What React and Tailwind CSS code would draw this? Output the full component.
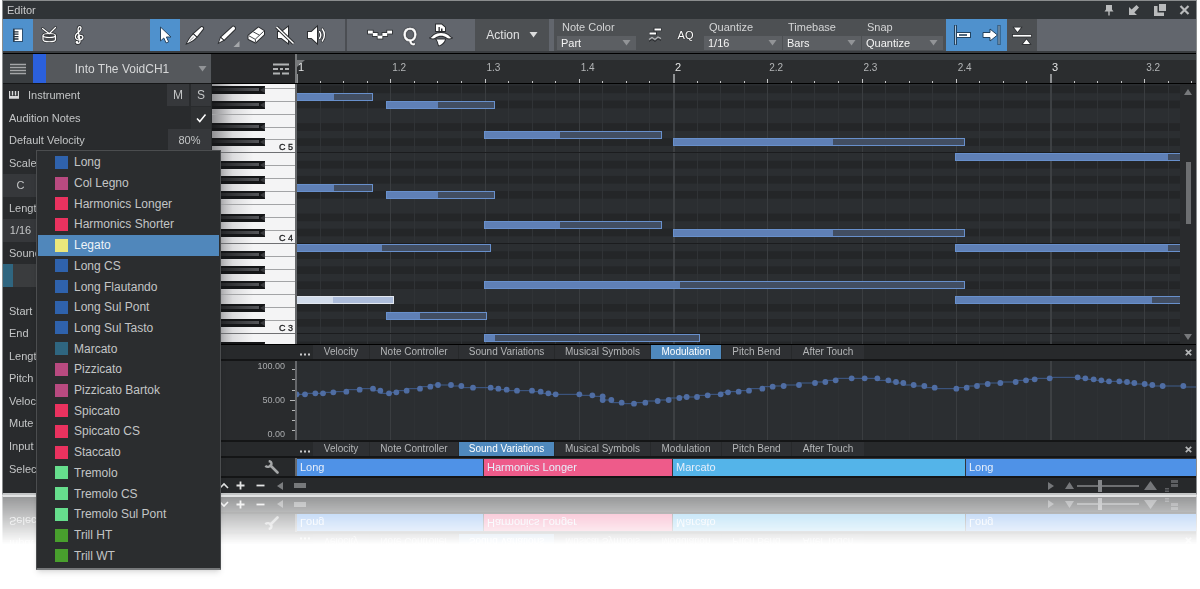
import React from "react";

const BEAT = 94.25;
const ROW = 7.53;
const C5_LINE = 69.4;
const BLACK = [1, 3, 6, 8, 10];

// start, velocity split and end are distances from bar 1; pitch counts semitones from C 5
const NOTES = [
  { start: 0, split: 38, end: 77, pitch: 7 },
  { start: 90, split: 142, end: 199, pitch: 6 },
  { start: 188, split: 264, end: 366, pitch: 2 },
  { start: 377, split: 537, end: 669, pitch: 1 },
  { start: 659, split: 872, end: 920, pitch: -1 },
  { start: 0, split: 38, end: 77, pitch: -5 },
  { start: 90, split: 142, end: 199, pitch: -6 },
  { start: 188, split: 264, end: 366, pitch: -10 },
  { start: 377, split: 537, end: 669, pitch: -11 },
  { start: 0, split: 86, end: 195, pitch: -13 },
  { start: 659, split: 872, end: 920, pitch: -13 },
  { start: 188, split: 384, end: 669, pitch: -18 },
  { start: 0, split: 37, end: 98, pitch: -20, selected: true },
  { start: 659, split: 856, end: 920, pitch: -20 },
  { start: 90, split: 124, end: 191, pitch: -22 },
  { start: 188, split: 199, end: 404, pitch: -25 },
];

// controller samples, three units to a pixel
const CURVE = [
  [140, 163], [165, 163], [196, 160], [219, 160], [250, 157], [289, 155], [329, 149], [369, 146], [391, 152],
  [417, 160], [439, 157], [470, 152], [510, 146], [541, 140], [564, 135], [603, 135], [634, 138], [669, 143],
  [722, 143], [745, 146], [770, 149], [801, 152], [846, 152], [872, 155], [895, 160], [917, 163], [988, 163],
  [1027, 166], [1058, 169], [1058, 180], [1084, 180], [1115, 188], [1152, 191], [1186, 188], [1223, 183],
  [1256, 180], [1288, 174], [1310, 171], [1341, 171], [1373, 166], [1412, 163], [1434, 157], [1466, 155],
  [1497, 152], [1537, 146], [1568, 140], [1601, 138], [1647, 135], [1695, 129], [1726, 126], [1757, 121],
  [1805, 115], [1844, 115], [1882, 115], [1915, 121], [1938, 126], [1960, 129], [1991, 135], [2023, 138],
  [2054, 143], [2119, 146], [2150, 143], [2181, 138], [2213, 132], [2251, 129], [2297, 126], [2328, 121],
  [2354, 118], [2399, 115], [2483, 112], [2506, 115], [2531, 118], [2554, 121], [2577, 124], [2608, 124],
  [2631, 126], [2653, 129], [2684, 132], [2707, 135], [2738, 138], [2800, 138],
].map(([x, y]) => [(x - 141) / 3, (y - 63) / 3]);

const VARIATIONS = [
  ["Long", "#2f62ac"],
  ["Col Legno", "#b84a80"],
  ["Harmonics Longer", "#ea325f"],
  ["Harmonics Shorter", "#ea325f"],
  ["Legato", "#ebe77c"],
  ["Long CS", "#2f62ac"],
  ["Long Flautando", "#2f62ac"],
  ["Long Sul Pont", "#2f62ac"],
  ["Long Sul Tasto", "#2f62ac"],
  ["Marcato", "#2f6680"],
  ["Pizzicato", "#b84a80"],
  ["Pizzicato Bartok", "#b84a80"],
  ["Spiccato", "#ea325f"],
  ["Spiccato CS", "#ea325f"],
  ["Staccato", "#ea325f"],
  ["Tremolo", "#66de8d"],
  ["Tremolo CS", "#66de8d"],
  ["Tremolo Sul Pont", "#66de8d"],
  ["Trill HT", "#489f2d"],
  ["Trill WT", "#489f2d"],
];

const TABS = [
  ["Velocity", "w-[56px]"],
  ["Note Controller", "w-[88px]"],
  ["Sound Variations", "w-[95px]"],
  ["Musical Symbols", "w-[95px]"],
  ["Modulation", "w-[70px]"],
  ["Pitch Bend", "w-[69px]"],
  ["After Touch", "w-[72px]"],
];

function Icon({ w = 24, h = 24, children }) {
  return (
    <svg width={w} height={h} viewBox={`0 0 ${w} ${h}`} fill="none" aria-hidden="true" className="block shrink-0">
      {children}
    </svg>
  );
}

function Caret({ className = "text-[#929497]" }) {
  return (
    <svg width="9" height="6" viewBox="0 0 9 6" aria-hidden="true" className={className}>
      <path d="M0.500 0h8L4.500 5.500z" fill="currentColor" />
    </svg>
  );
}

function Tool({ label, active, className = "w-[30px]", children }) {
  return (
    <button
      type="button"
      aria-label={label}
      aria-pressed={!!active}
      className={`flex h-full shrink-0 items-center justify-center ${active ? "bg-[#4f91cd]" : ""} ${className}`}
    >
      {children}
    </button>
  );
}

const OUT = { stroke: "#2b2d30", strokeWidth: 1, paintOrder: "stroke", strokeLinejoin: "round" };

function PianoIcon() {
  return (
    <Icon>
      <rect x="7.500" y="6" width="9" height="12.500" fill="#fff" stroke="#2d4f70" strokeWidth="1" />
      <path d="M7.500 8.800h5M7.500 11.200h5M7.500 13.600h5M7.500 16h5" stroke="#1f2d3a" strokeWidth="1.300" />
      <path d="M8 6v12.500" stroke="#1f2d3a" strokeWidth="1.200" />
    </Icon>
  );
}

function DrumIcon() {
  return (
    <Icon>
      <g stroke="#2b2d30" strokeWidth="2.600" strokeLinecap="round">
        <path d="M5.500 5.500l6.500 5M18.500 4.500l-6 6M6 13v3.500c0 3 12.500 3 12.500 0V13" />
        <ellipse cx="12.200" cy="12.500" rx="6.200" ry="2" />
      </g>
      <path d="M6 13v3.500c0 3 12.500 3 12.500 0V13z" fill="#4a4c50" />
      <g stroke="#fff" strokeWidth="1.200" strokeLinecap="round">
        <path d="M6 13v3.500c0 3 12.500 3 12.500 0V13" />
        <ellipse cx="12.200" cy="12.500" rx="6.200" ry="2" fill="#3b3d41" />
        <path d="M5.500 5.500l6.500 5M18.500 4.500l-6 6" />
      </g>
    </Icon>
  );
}

function ClefIcon() {
  const d =
    "M12.600 12.400c-2.200.1-2.100 2.900-.2 3.100M12.600 16.800c-3.800.6-5.400-2.900-3.500-5.300 1.500-1.900 4.700-3.500 4.900-6.100.1-2.600-2.700-2.300-2.900.3-.2 3.200 1.900 9.300 1.900 12.600 0 2.700-3.500 2.700-3.700.7M12.600 12.400c4.200-.6 4.500 4.100 0 4.400";
  return (
    <Icon>
      <g strokeLinecap="round">
        <path d={d} stroke="#2b2d30" strokeWidth="2.800" />
        <path d={d} stroke="#fff" strokeWidth="1.300" />
        <circle cx="10" cy="19.200" r="1.200" fill="#fff" />
      </g>
    </Icon>
  );
}

function ArrowIcon() {
  return (
    <Icon>
      <path d="M7.500 4v14l3.300-3 2.300 5 2.600-1.200-2.300-4.800h4.600z" fill="#fff" stroke="#28445f" strokeWidth="1" />
    </Icon>
  );
}

function KnifeIcon() {
  return (
    <Icon>
      <path d="M18.500 4c1 .1 1.800.8 1.600 1.800L14 13.500l-3.200-2.800z" fill="#fff" stroke="#2b2d30" strokeWidth="2" paintOrder="stroke" />
      <path d="M10.300 11.500l3 2.800c-1.500 2-5.500 4.700-9.300 6 1.500-3.200 3.800-6.600 6.300-8.800z" fill="#fff" stroke="#2b2d30" strokeWidth="1.800" paintOrder="stroke" />
      <path d="M6.500 18l4.200-4" stroke="#6a6d72" strokeWidth=".8" />
    </Icon>
  );
}

function PencilIcon() {
  return (
    <Icon w={28} h={28}>
      <path d="M21 5.500c1.300.2 2.200 1.100 2 2.500L12 18.800l-2.800-2.600z" fill="#fff" stroke="#2b2d30" strokeWidth="2" paintOrder="stroke" />
      <path d="M8.700 16.900l2.500 2.400-4.200 2.200z" fill="#fff" stroke="#2b2d30" strokeWidth="1.600" paintOrder="stroke" />
      <path d="M27.500 20v6h-6z" fill="#a5a8ab" />
    </Icon>
  );
}

function EraserIcon() {
  return (
    <Icon>
      <path d="M14.500 4.500l5.500 3.500v3.500l-8.500 8L4.500 16v-3.500z" fill="#fff" stroke="#2b2d30" strokeWidth="2" paintOrder="stroke" strokeLinejoin="round" />
      <path d="M4.700 12.700l6.500 3.600 8.500-8M11.400 16.300v3M9.200 8.800l6.300 3.400" stroke="#44474b" strokeWidth="1" />
    </Icon>
  );
}

function MuteIcon() {
  return (
    <Icon>
      <path d="M5 9h3.500L15 4v16l-6.500-5H5z" fill="#fff" stroke="#2b2d30" strokeWidth="2" paintOrder="stroke" />
      <path d="M3.500 4L20.500 20.500" stroke="#2b2d30" strokeWidth="3.400" />
      <path d="M3.500 4L20.500 20.500" stroke="#fff" strokeWidth="1.500" />
    </Icon>
  );
}

function SpeakerIcon() {
  return (
    <Icon>
      <path d="M4 9h3.500L13 4v16l-5.500-5H4z" fill="#fff" stroke="#2b2d30" strokeWidth="2" paintOrder="stroke" />
      <path d="M15.500 8.500c1.500 2 1.500 5 0 7M18.300 6c2.800 3.500 2.800 8.500 0 12" stroke="#2b2d30" strokeWidth="2.800" strokeLinecap="round" />
      <path d="M15.500 8.500c1.500 2 1.500 5 0 7M18.300 6c2.800 3.500 2.800 8.500 0 12" stroke="#fff" strokeWidth="1.400" strokeLinecap="round" />
    </Icon>
  );
}

function StepsIcon() {
  const steps = [[0, 0], [4.8, 2.4], [9.6, 5], [14.4, 2.4], [19.2, 0]];
  return (
    <Icon w={26} h={12}>
      {steps.map(([x, y]) => (
        <rect key={x} x={x + 0.2} y={y + 0.8} width="6.400" height="4.600" fill="#2b2d30" />
      ))}
      {steps.map(([x, y]) => (
        <rect key={x} x={x + 1} y={y + 1.6} width="4.800" height="3" fill="#fff" />
      ))}
    </Icon>
  );
}

function HumanizeIcon() {
  return (
    <Icon w={24} h={26}>
      <path d="M7 9V2.500h5.500l3.500 3V9h-2.500V6.500H12V9h-1.200V5H9.500v4z" fill="#fff" stroke="#2b2d30" strokeWidth="1.800" paintOrder="stroke" />
      <path d="M1.500 16c1-.3 1.800-1.500 3.500-3 3.500-2.800 10.500-2.800 14 0 1.700 1.500 2.500 2.700 3.500 3-2 .8-3.800.5-5-.5-3-2.300-8-2.300-11 0-1.200 1-3 1.300-5 .5z" fill="#fff" stroke="#2b2d30" strokeWidth="1.800" paintOrder="stroke" />
      <path d="M7.500 17.500h8.500c-.5 2.500-3 5-6 6-1-2-.8-4-2.500-6z" fill="#fff" stroke="#2b2d30" strokeWidth="1.800" paintOrder="stroke" />
    </Icon>
  );
}

function WaveIcon() {
  return (
    <Icon w={14} h={18}>
      <path d="M5.500 3.500h8M1 7.500h8" stroke="#2b2d30" strokeWidth="3.400" />
      <path d="M6.500 3.500h6.500M1.500 7.500h6.500" stroke="#fff" strokeWidth="1.800" />
      <path d="M1 13.500l3-2 3 2 3-2.500 3 1.500" stroke="#b3b5b8" strokeWidth="1.200" />
      <path d="M1 15.500l3-2 3 2 3-2.500 3 1.500" stroke="#2b2d30" strokeWidth="1" />
    </Icon>
  );
}

function ToolbarSelect({ id, label, value, className }) {
  return (
    <div className={`flex h-full flex-col justify-between pb-[1px] ${className}`}>
      <label htmlFor={id} className="pl-[5px] pt-[2px] text-[11px] leading-[13px] text-[#d4d5d6]">
        {label}
      </label>
      <div className="grid h-[14px] bg-[#5c5f63]">
        <select
          id={id}
          defaultValue={value}
          className="col-start-1 row-start-1 h-[14px] w-full appearance-none bg-transparent pl-[4px] text-[11px] leading-[14px] text-[#f4f4f4] outline-none"
        >
          <option>{value}</option>
        </select>
        <span className="pointer-events-none col-start-1 row-start-1 mr-[5px] self-center justify-self-end">
          <Caret />
        </span>
      </div>
    </div>
  );
}

function TitleBar() {
  return (
    <header className="flex h-[18px] items-center justify-between bg-[#303437] pl-[4px] pr-[6px]">
      <h1 className="text-[11px] leading-[18px] text-[#c9cacb]">Editor</h1>
      <div className="flex items-center gap-[13px] text-[#b9bbbc]">
        <button type="button" aria-label="Pin">
          <Icon w={12} h={12}>
            <path d="M3 1h6v4.500l1.500 2h-9l1.500-2zM5.300 7h1.400v4.500H5.300z" fill="currentColor" />
          </Icon>
        </button>
        <button type="button" aria-label="Dock">
          <Icon w={12} h={12}>
            <path d="M1 11V3l2.600 2.600L8.500 1 11 3.500 6.400 8.400 9 11z" fill="currentColor" />
          </Icon>
        </button>
        <button type="button" aria-label="Detach">
          <Icon w={13} h={12}>
            <path d="M6 0h7v7H6zM1 2h3.500v6.500H11V12H1z" fill="currentColor" />
          </Icon>
        </button>
        <button type="button" aria-label="Close">
          <Icon w={11} h={12}>
            <path d="M1.500 2l8 8M9.500 2l-8 8" stroke="currentColor" strokeWidth="2.200" />
          </Icon>
        </button>
      </div>
    </header>
  );
}

function Toolbar() {
  return (
    <div className="border-b border-black bg-[#3a3d40] pb-[2px]">
      <div className="flex h-[32px] bg-[#62666d]">
        <div className="flex w-[147px] shrink-0">
          <Tool label="Piano view" active>
            <PianoIcon />
          </Tool>
          <Tool label="Drum view" className="w-[31px]">
            <DrumIcon />
          </Tool>
          <Tool label="Score view">
            <ClefIcon />
          </Tool>
        </div>
        <div className="flex w-[197px] shrink-0 border-r-2 border-[#4b4e53]">
          <Tool label="Arrow tool" active>
            <ArrowIcon />
          </Tool>
          <Tool label="Split tool">
            <KnifeIcon />
          </Tool>
          <Tool label="Paint tool" className="w-[32px]">
            <PencilIcon />
          </Tool>
          <Tool label="Eraser tool" className="w-[28px]">
            <EraserIcon />
          </Tool>
          <Tool label="Mute tool">
            <MuteIcon />
          </Tool>
          <Tool label="Listen tool" className="w-[32px]">
            <SpeakerIcon />
          </Tool>
        </div>
        <div className="flex w-[128px] shrink-0 pl-[18px]">
          <Tool label="Steps">
            <StepsIcon />
          </Tool>
          <Tool label="Quantize">
            <span className="text-[18px] leading-[20px] text-white [-webkit-text-stroke:0.5px_white] [text-shadow:0_0_2px_#222,0_0_1px_#222]">
              Q
            </span>
          </Tool>
          <Tool label="Humanize" className="w-[32px]">
            <HumanizeIcon />
          </Tool>
        </div>
        <button
          type="button"
          className="flex w-[74px] shrink-0 items-center justify-center gap-[9px] bg-[#4d5053] text-[12px] text-[#e0e1e2]"
        >
          Action
          <Caret className="text-[#dcdddd]" />
        </button>
        <div className="ml-[5px] flex w-[392px] shrink-0 bg-[#4d5053] pl-[3px]">
          <ToolbarSelect id="note-color" label="Note Color" value="Part" className="w-[79px]" />
          <div className="flex w-[68px] items-center">
            <Tool label="Apply groove" className="w-[37px]">
              <WaveIcon />
            </Tool>
            <Tool label="Auto quantize" className="w-[25px]">
              <span className="text-[11px] text-white [text-shadow:0_0_1px_#222,0_0_1px_#222]">AQ</span>
            </Tool>
          </div>
          <div className="flex gap-[1px]">
            <ToolbarSelect id="quantize" label="Quantize" value="1/16" className="w-[78px]" />
            <ToolbarSelect id="timebase" label="Timebase" value="Bars" className="w-[78px]" />
            <ToolbarSelect id="snap" label="Snap" value="Quantize" className="w-[81px]" />
          </div>
        </div>
        <Tool label="Snap to start" active className="w-[31px]">
          <Icon>
            <path d="M5.500 2v20" stroke="#22425f" strokeWidth="3" />
            <path d="M5.500 2.500v19" stroke="#a9c3da" strokeWidth="1" />
            <rect x="6.500" y="9.500" width="14" height="5" fill="#fff" stroke="#22425f" />
            <path d="M9 12h8" stroke="#22425f" strokeWidth="1.600" />
          </Icon>
        </Tool>
        <Tool label="Snap to end" active>
          <Icon>
            <path d="M19 2v20" stroke="#22425f" strokeWidth="3" />
            <path d="M19 2.500v19" stroke="#a9c3da" strokeWidth="1" />
            <path d="M3 9.500h7V6l7.500 6-7.500 6v-3.500H3z" fill="#fff" stroke="#22425f" />
          </Icon>
        </Tool>
        <Tool label="Snap to grid" className="w-[30px] bg-[#4d5053]">
          <Icon w={20} h={24}>
            <path d="M2 4.500h7l-3.500 4.500zM11 21h7l-3.500-4.500z" fill="#fff" stroke="#2b2d30" strokeWidth="1.600" paintOrder="stroke" />
            <rect x="0.500" y="11.500" width="19" height="2.500" fill="#fff" stroke="#2b2d30" strokeWidth=".8" />
          </Icon>
        </Tool>
      </div>
    </div>
  );
}

function Field({ children }) {
  return <div className="flex min-h-0 flex-1 items-center justify-between pl-[6px]">{children}</div>;
}

function Inspector() {
  return (
    <aside className="flex w-[209px] shrink-0 flex-col bg-[#292b2d] text-[11px] text-[#c3c5c6]">
      <div className="flex h-[29px] pr-[1px]">
        <button type="button" aria-label="Track list" className="flex w-[30px] items-center justify-center bg-[#3a3e41]">
          <Icon w={16} h={12}>
            <path d="M0 1.500h16M0 4.500h16M0 7.500h16M0 10.500h16" stroke="#a4a6a8" strokeWidth="1.500" />
          </Icon>
        </button>
        <span className="w-[13px] bg-[#2b60dc]" />
        <button type="button" className="flex flex-1 items-center bg-[#55585c] pr-[4px] text-[12px] text-[#d6d7d8]">
          <span className="flex-1 text-center">Into The VoidCH1</span>
          <Caret />
        </button>
      </div>
      <div className="flex h-[397px] flex-col border-t border-[#161718]">
        <Field>
          <span className="flex items-center gap-[9px]">
            <Icon w={10} h={8}>
              <path d="M.5 0v7h9V0M3.500 0v4.500M6.500 0v4.500" stroke="#d8d9da" strokeWidth="1.400" />
              <path d="M1 6h8" stroke="#d8d9da" strokeWidth="2" />
            </Icon>
            Instrument
          </span>
          <span className="flex h-full gap-[2px] pr-[1px] pb-[1px] text-[12px]">
            <button type="button" className="w-[22px] bg-[#36383b]">M</button>
            <button type="button" className="w-[20px] bg-[#36383b]">S</button>
          </span>
        </Field>
        <Field>
          <label htmlFor="audition">Audition Notes</label>
          <span className="mr-[1px] grid h-full w-[20px] place-items-center bg-[#2f3133]">
            <input id="audition" type="checkbox" defaultChecked className="col-start-1 row-start-1 size-[14px] appearance-none" />
            <span className="pointer-events-none col-start-1 row-start-1">
              <Icon w={12} h={12}>
                <path d="M2 6.500l2.800 3L10.500 2.500" stroke="#fff" strokeWidth="1.500" />
              </Icon>
            </span>
          </span>
        </Field>
        <Field>
          <label htmlFor="velocity">Default Velocity</label>
          <input
            id="velocity"
            defaultValue="80%"
            className="mr-[1px] h-full w-[43px] bg-[#36383b] text-center outline-none"
          />
        </Field>
        <Field>Scale</Field>
        <div className="flex min-h-0 flex-1">
          <button type="button" className="w-[35px] bg-[#36383b]">C</button>
        </div>
        <Field>Length</Field>
        <div className="flex min-h-0 flex-1">
          <button type="button" className="w-[35px] bg-[#36383b]">1/16</button>
        </div>
        <Field>Sound</Field>
        <div className="flex min-h-0 flex-1 bg-[#3a3c3e]">
          <span className="w-[10px] bg-[#2f6680]" />
        </div>
        <div className="h-[13px] shrink-0" />
        <Field>Start</Field>
        <Field>End</Field>
        <Field>Length</Field>
        <Field>Pitch</Field>
        <Field>Velocity</Field>
        <Field>Mute</Field>
        <Field>Input</Field>
        <Field>Selection</Field>
      </div>
    </aside>
  );
}

function Ruler() {
  const ticks = [];
  for (let i = 0; i < 39; i++) ticks.push(i);
  return (
    <div className="flex h-[30px] border-b border-black">
      <div className="flex w-[85px] shrink-0 items-center justify-end border-r-2 border-[#77797b] bg-[#292a2c] pr-[6px]">
        <button type="button" aria-label="Ruler options">
          <Icon w={16} h={12}>
            <path d="M0 1.500h16M0 6h5M7 6h3M12 6h4M0 10.500h7M9 10.500h7" stroke="#b1b3b4" strokeWidth="2" />
          </Icon>
        </button>
      </div>
      <div className="min-w-0 flex-1 border-t-[6px] border-[#3a3e41] bg-[#2b2d2f]">
        <svg width="100%" height="23" className="block" fontFamily="Liberation Sans, Arial, sans-serif">
          <path d="M0 0h8L0 7z" fill="#77797b" />
          {ticks.map((i) => {
            const x = Math.round((i * BEAT) / 4) - 1;
            const beat = i % 4 === 0;
            const bar = i % 16 === 0;
            return (
              <rect
                key={i}
                x={x}
                y={bar ? 14 : beat ? 19 : 21}
                width={bar ? 2 : 1}
                height={bar ? 9 : beat ? 4 : 2}
                fill={bar ? "#8f9193" : "#c5c6c7"}
              />
            );
          })}
          {ticks
            .filter((i) => i % 4 === 0)
            .map((i) => {
              const bar = Math.floor(i / 16) + 1;
              const beat = (i % 16) / 4 + 1;
              return (
                <text key={i} x={(i * BEAT) / 4 + 1} y="11" fontSize={beat === 1 ? 11 : 10} fill={beat === 1 ? "#e4e5e5" : "#b3b5b7"}>
                  {beat === 1 ? bar : `${bar}.${beat}`}
                </text>
              );
            })}
        </svg>
      </div>
    </div>
  );
}

function Keyboard() {
  const whites = [];
  const blacks = [];
  for (let k = -18; k < 7; k++) whites.push(k);
  for (let n = -27; n < 10; n++) if (BLACK.includes((n + 36) % 12)) blacks.push(n);
  return (
    <svg width="83" height="260" className="block" fontFamily="Liberation Sans, Arial, sans-serif">
      <defs>
        <linearGradient id="ivory" x1="0" x2="1" y1="0" y2="0">
          <stop offset="0" stopColor="#8f8f92" />
          <stop offset=".25" stopColor="#dcdcde" />
          <stop offset=".5" stopColor="#f4f4f5" />
          <stop offset="1" stopColor="#f4f4f5" />
        </linearGradient>
        <linearGradient id="ebony" x1="0" x2="1" y1="0" y2="0">
          <stop offset="0" stopColor="#1a1b1d" />
          <stop offset="1" stopColor="#55565a" />
        </linearGradient>
      </defs>
      <rect width="83" height="260" fill="url(#ivory)" />
      {whites.map((k) => (
        <rect key={k} y={Math.round(C5_LINE - (k * ROW * 12) / 7) - 1} width="83" height="1" fill={k % 7 === 0 ? "#6f7073" : "#a3a4a6"} />
      ))}
      {blacks.map((n) => {
        const y = Math.round(C5_LINE - (n + 1) * ROW);
        return (
          <g key={n}>
            <rect y={y} width="53" height="8" fill="#151618" />
            <rect y={y + 2} width="47" height="3" fill="url(#ebony)" />
            <path d={`M53 ${y + 1}l-5 3 5 3z`} fill="#3a3b3e" />
          </g>
        );
      })}
      {[5, 4, 3].map((c) => (
        <text key={c} x="81" y={C5_LINE + (5 - c) * ROW * 12 - 3} fontSize="9" textAnchor="end" fill="#1c1d1f" stroke="#1c1d1f" strokeWidth=".3">
          C {c}
        </text>
      ))}
    </svg>
  );
}

function GridLines({ height, faint }) {
  const lines = [];
  for (let i = 1; i < 80; i++) lines.push(i);
  return lines.map((i) => (
    <rect
      key={i}
      x={Math.round((i * BEAT) / 4) - 1}
      width={i % 16 === 0 ? 2 : 1}
      height={height}
      fill={i % 16 === 0 ? "#3d4043" : i % 4 === 0 ? "#3a3d40" : faint}
    />
  ));
}

function PianoRoll() {
  const rows = [];
  for (let n = -27; n < 10; n++) rows.push(n);
  return (
    <div className="flex h-[261px] border-b border-black">
      <div className="w-[85px] shrink-0 border-r-2 border-[#66686b]">
        <Keyboard />
      </div>
      <div className="min-w-0 flex-1 overflow-hidden">
        <svg width="100%" height="260" className="block bg-[#2b2e31]" role="img" aria-label="Notes">
          {rows
            .filter((n) => BLACK.includes((n + 36) % 12))
            .map((n) => (
              <rect key={n} y={C5_LINE - (n + 1) * ROW} width="100%" height={ROW} fill="#242628" />
            ))}
          <GridLines height={260} faint="#303336" />
          {[0, -12, -24].map((n) => (
            <rect key={n} y={Math.round(C5_LINE - n * ROW) - 1} width="100%" height="1" fill="#1b1c1e" />
          ))}
          {NOTES.map((note, i) => {
            const y = Math.round(C5_LINE - (note.pitch + 1) * ROW);
            return (
              <g key={i}>
                <rect
                  x={note.start - 0.5}
                  y={y + 0.5}
                  width={note.end - note.start - 1}
                  height="7"
                  fill={note.selected ? "#adbddb" : "#424e62"}
                  stroke={note.selected ? "#e3e8f0" : "#6890cc"}
                />
                <rect
                  x={note.start}
                  y={y + 1}
                  width={note.split - note.start - 1}
                  height="6"
                  fill={note.selected ? "#d2dceb" : "#5f80b6"}
                />
              </g>
            );
          })}
        </svg>
      </div>
      <div className="flex w-[16px] shrink-0 flex-col items-center bg-[#292b2d] pt-[5px] pb-[4px]">
        <button type="button" aria-label="Scroll up">
          <Icon w={8} h={6}>
            <path d="M0 6h8L4 0z" fill="#77797b" />
          </Icon>
        </button>
        <span className="mt-[67px] h-[62px] w-[5px] bg-[#6d6f71]" />
        <button type="button" aria-label="Scroll down" className="mt-auto">
          <Icon w={8} h={6}>
            <path d="M0 0h8L4 6z" fill="#77797b" />
          </Icon>
        </button>
      </div>
    </div>
  );
}

function LaneTabs({ active }) {
  return (
    <nav className="flex h-[16px] border-b-2 border-[#141516] bg-[#27292b] pl-[85px] text-[10px] leading-[14px] text-[#b3b5b7]">
      <button type="button" aria-label="More lanes" className="flex w-[16px] items-center justify-center">
        <Icon w={10} h={8}>
          <path d="M0 5.500h2v2H0zM4 5.500h2v2H4zM8 5.500h2v2H8z" fill="#c9cacb" />
        </Icon>
      </button>
      <div className="flex flex-1 gap-[1px]">
        {TABS.map(([name, width]) => (
          <button
            key={name}
            type="button"
            className={`h-full shrink-0 whitespace-nowrap ${width} ${name === active ? "bg-[#4f89bd] text-white" : "bg-[#2e3033]"}`}
          >
            {name}
          </button>
        ))}
      </div>
      <button type="button" aria-label="Close lane" className="pr-[4px]">
        <Icon w={7} h={7}>
          <path d="M.8 .8l5.400 5.400M6.200 .8L.8 6.200" stroke="#b5b7b8" strokeWidth="1.700" />
        </Icon>
      </button>
    </nav>
  );
}

function Modulation() {
  const line = CURVE.map(([x, y], i) => (i ? `V${y}H${x}` : `M${x} ${y}`)).join("") + "V26H2000";
  return (
    <div className="flex h-[81px] border-b-2 border-[#141516] bg-[#2b2e31]">
      <div className="flex w-[85px] shrink-0 border-r-2 border-[#66686b] bg-[#292b2d]">
        <div className="flex flex-1 flex-col items-end justify-between pr-[5px] text-[9px] leading-[11px] text-[#a9abad]">
          <span>100.00</span>
          <span>50.00</span>
          <span>0.00</span>
        </div>
        <svg width="5" height="79" className="block" aria-hidden="true">
          {[8, 18, 29, 39, 49, 59, 69].map((y) => (
            <rect key={y} x={y === 39 ? 0 : 2} y={y} width="5" height="1" fill="#b5b7b8" />
          ))}
        </svg>
      </div>
      <div className="min-w-0 flex-1 overflow-hidden">
        <svg width="100%" height="79" className="block" role="img" aria-label="Modulation curve">
          <GridLines height={79} faint="#2e3134" />
          <path d={line} fill="none" stroke="#3f5c8c" strokeWidth="1" />
          {CURVE.map(([x, y], i) => (
            <circle key={i} cx={x} cy={y} r="2.900" fill="#4f6da3" />
          ))}
        </svg>
      </div>
    </div>
  );
}

function VariationLane() {
  return (
    <div className="flex h-[20px] border-b-2 border-[#141516] bg-[#27292b] text-[11px] leading-[18px] text-[#e6eefa]">
      <div className="flex w-[85px] shrink-0 items-center justify-end border-r-2 border-[#66686b] pr-[16px]">
        <button type="button" aria-label="Edit variations">
          <Icon w={15} h={14}>
            <path d="M6.500 5.500l7 7" stroke="#a5a7a8" strokeWidth="2.600" strokeLinecap="round" />
            <path d="M1.300 5.800c2 1.800 5.800 1 6.200-1.500C7.700 2.500 6.500 1.300 4.700 1" stroke="#a5a7a8" strokeWidth="2.300" />
          </Icon>
        </button>
      </div>
      <div className="flex min-w-0 flex-1 gap-[1px] bg-[#33353a] pt-[1px] leading-[17px]">
        <span className="w-[186px] shrink-0 bg-[#4f92e7] pl-[3px]">Long</span>
        <span className="w-[188px] shrink-0 bg-[#ee5b8a] pl-[3px]">Harmonics Longer</span>
        <span className="w-[292px] shrink-0 bg-[#54b4e9] pl-[3px]">Marcato</span>
        <span className="flex-1 bg-[#4f92e7] pl-[3px]">Long</span>
      </div>
    </div>
  );
}

function BottomBar() {
  return (
    <footer className="flex h-[15px] items-center justify-between bg-[#27292b] pl-[7px] pr-[18px]">
      <div className="flex items-center">
        <button type="button" aria-label="Collapse">
          <Icon w={10} h={8}>
            <path d="M1 6l4-4 4 4" stroke="#e3e4e4" strokeWidth="1.600" />
          </Icon>
        </button>
        <button type="button" aria-label="Add lane" className="ml-[7px]">
          <Icon w={9} h={9}>
            <path d="M4.500 .5v8M.5 4.500h8" stroke="#e3e4e4" strokeWidth="1.800" />
          </Icon>
        </button>
        <button type="button" aria-label="Remove lane" className="ml-[11px]">
          <Icon w={9} h={9}>
            <path d="M.5 4.500h8" stroke="#e3e4e4" strokeWidth="1.800" />
          </Icon>
        </button>
        <button type="button" aria-label="Scroll left" className="ml-[12px]">
          <Icon w={6} h={8}>
            <path d="M6 0v8L0 4z" fill="#7b7d7f" />
          </Icon>
        </button>
        <span className="ml-[11px] h-[5px] w-[12px] bg-[#77797b]" />
      </div>
      <div className="flex items-center text-[#75777a]">
        <button type="button" aria-label="Scroll right">
          <Icon w={6} h={8}>
            <path d="M0 0v8l6-4z" fill="currentColor" />
          </Icon>
        </button>
        <span className="ml-[11px]">
          <Icon w={9} h={7}>
            <path d="M0 7h9L4.500 0z" fill="currentColor" />
          </Icon>
        </span>
        <input
          type="range"
          aria-label="Zoom"
          defaultValue="37"
          className="mx-[3px] h-[12px] w-[62px] appearance-none bg-transparent [&::-webkit-slider-runnable-track]:h-[2px] [&::-webkit-slider-runnable-track]:bg-[#6d6f71] [&::-webkit-slider-thumb]:-mt-[5px] [&::-webkit-slider-thumb]:h-[12px] [&::-webkit-slider-thumb]:w-[4px] [&::-webkit-slider-thumb]:appearance-none [&::-webkit-slider-thumb]:bg-[#85878a]"
        />
        <span className="ml-[2px]">
          <Icon w={13} h={9}>
            <path d="M0 9h13L6.500 0z" fill="currentColor" />
          </Icon>
        </span>
        <span className="ml-[8px]">
          <Icon w={13} h={12}>
            <path d="M6 0h7v3H6zM6 4h7v3H6zM0 8h4v1.500H0zM0 10.500h4V12H0z" fill="#5d5f62" />
          </Icon>
        </span>
      </div>
    </footer>
  );
}

function VariationMenu() {
  return (
    <div
      role="menu"
      className="absolute left-[36px] top-[150px] z-10 flex h-[420px] w-[185px] flex-col border border-b-2 border-[#4b4d4f] border-b-[#77797b] bg-[#2b2d2f] px-[1px] pt-[1px] pb-[2px] text-[12px] text-[#c3c5c6] shadow-md"
    >
      {VARIATIONS.map(([name, color]) => (
        <button
          key={name}
          type="button"
          role="menuitem"
          className={`flex min-h-0 flex-1 items-center gap-[6px] pl-[17px] text-left ${
            name === "Legato" ? "bg-[#5087bb] text-[#eef3f8]" : ""
          }`}
        >
          <span className="size-[13px] shrink-0" style={{ backgroundColor: color }} />
          {name}
        </button>
      ))}
    </div>
  );
}

export default function App() {
  return (
    <div className="relative min-h-screen overflow-hidden bg-white font-['Liberation_Sans',Arial,sans-serif]">
      <main className="ml-[2px] mr-[3px] border border-b-2 border-[#8a8d8e] border-b-[#c4c6c7] bg-[#27292b] [-webkit-box-reflect:below_0_linear-gradient(transparent_90%,rgba(0,0,0,0.5))]">
        <TitleBar />
        <Toolbar />
        <div className="flex">
          <Inspector />
          <section className="min-w-0 flex-1">
            <Ruler />
            <PianoRoll />
            <LaneTabs active="Modulation" />
            <Modulation />
            <LaneTabs active="Sound Variations" />
            <VariationLane />
            <BottomBar />
          </section>
        </div>
      </main>
      <VariationMenu />
    </div>
  );
}
